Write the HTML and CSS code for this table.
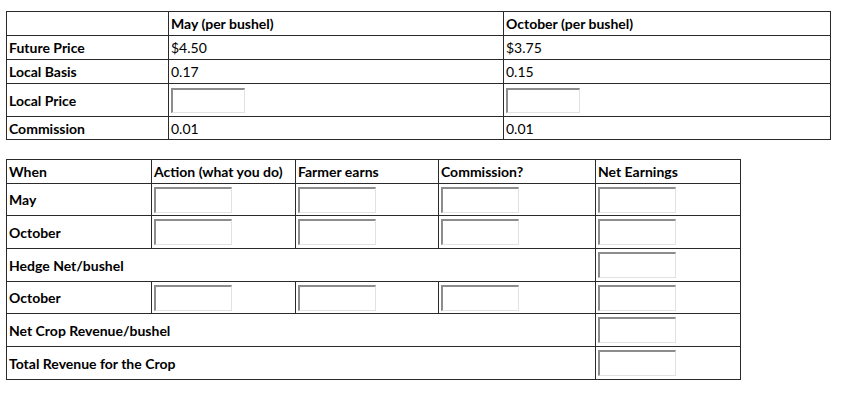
FILE: index.html
```html
<!DOCTYPE html>
<html>
<head>
<meta charset="utf-8">
<link rel="stylesheet" href="styles.css">
</head>
<body>
<div class="page">
<table class="grid prices">
  <colgroup><col class="p1"><col class="p2"><col class="p3"></colgroup>
  <tr class="r24"><td></td><td class="b">May (per bushel)</td><td class="b">October (per bushel)</td></tr>
  <tr class="r24"><td class="b">Future Price</td><td>$4.50</td><td>$3.75</td></tr>
  <tr class="r24"><td class="b">Local Basis</td><td>0.17</td><td>0.15</td></tr>
  <tr class="r33"><td class="b">Local Price</td><td><input class="box sm" type="text"></td><td><input class="box sm" type="text"></td></tr>
  <tr class="r23"><td class="b">Commission</td><td>0.01</td><td>0.01</td></tr>
</table>

<table class="grid hedge">
  <colgroup><col class="h1"><col class="h2"><col class="h3"><col class="h4"><col class="h5"></colgroup>
  <tr class="r24"><td class="b">When</td><td class="b">Action (what you do)</td><td class="b">Farmer earns</td><td class="b">Commission?</td><td class="b">Net Earnings</td></tr>
  <tr class="r32"><td class="b">May</td><td><input class="box" type="text"></td><td><input class="box" type="text"></td><td><input class="box" type="text"></td><td><input class="box" type="text"></td></tr>
  <tr class="r33"><td class="b">October</td><td><input class="box" type="text"></td><td><input class="box" type="text"></td><td><input class="box" type="text"></td><td><input class="box" type="text"></td></tr>
  <tr class="r33"><td class="b" colspan="4">Hedge Net/bushel</td><td><input class="box" type="text"></td></tr>
  <tr class="r32"><td class="b">October</td><td><input class="box" type="text"></td><td><input class="box" type="text"></td><td><input class="box" type="text"></td><td><input class="box" type="text"></td></tr>
  <tr class="r33"><td class="b" colspan="4">Net Crop Revenue/bushel</td><td><input class="box" type="text"></td></tr>
  <tr class="r33"><td class="b" colspan="4">Total Revenue for the Crop</td><td><input class="box" type="text"></td></tr>
</table>
</div>
</body>
</html>
```

FILE: styles.css
```css
html, body {
  margin: 0;
  padding: 0;
  background: #fff;
}
.page {
  padding: 11px 0 0 6px;
  font-family: Lato, "Open Sans", sans-serif;
  font-size: 14px;
  color: #000;
}
.grid {
  border-collapse: collapse;
  table-layout: fixed;
}
.grid td {
  border: 1px solid #2a2a2a;
  padding: 0 2px;
  vertical-align: middle;
  white-space: nowrap;
  line-height: 15px;
}
.b { font-weight: 700; }
.prices { width: 824px; }
.p1 { width: 162px; }
.p2 { width: 335px; }
.p3 { width: 327px; }
.hedge { width: 734px; margin-top: 19px; }
.h1 { width: 145px; }
.h2 { width: 144px; }
.h3 { width: 143px; }
.h4 { width: 157px; }
.h5 { width: 145px; }
.r24 td { height: 23px; }
.r23 td { height: 22px; }
.r33 td { height: 32px; }
.r32 td { height: 31px; }
.box {
  display: block;
  box-sizing: border-box;
  width: 78px;
  height: 26px;
  margin: 0;
  padding: 0;
  background: #fff;
  border-style: solid;
  border-width: 2px 1px 1px 2px;
  border-color: #8c8c8c #e2e2e2 #e2e2e2 #8c8c8c;
}
.box.sm {
  width: 74px;
  height: 25px;
}
```
